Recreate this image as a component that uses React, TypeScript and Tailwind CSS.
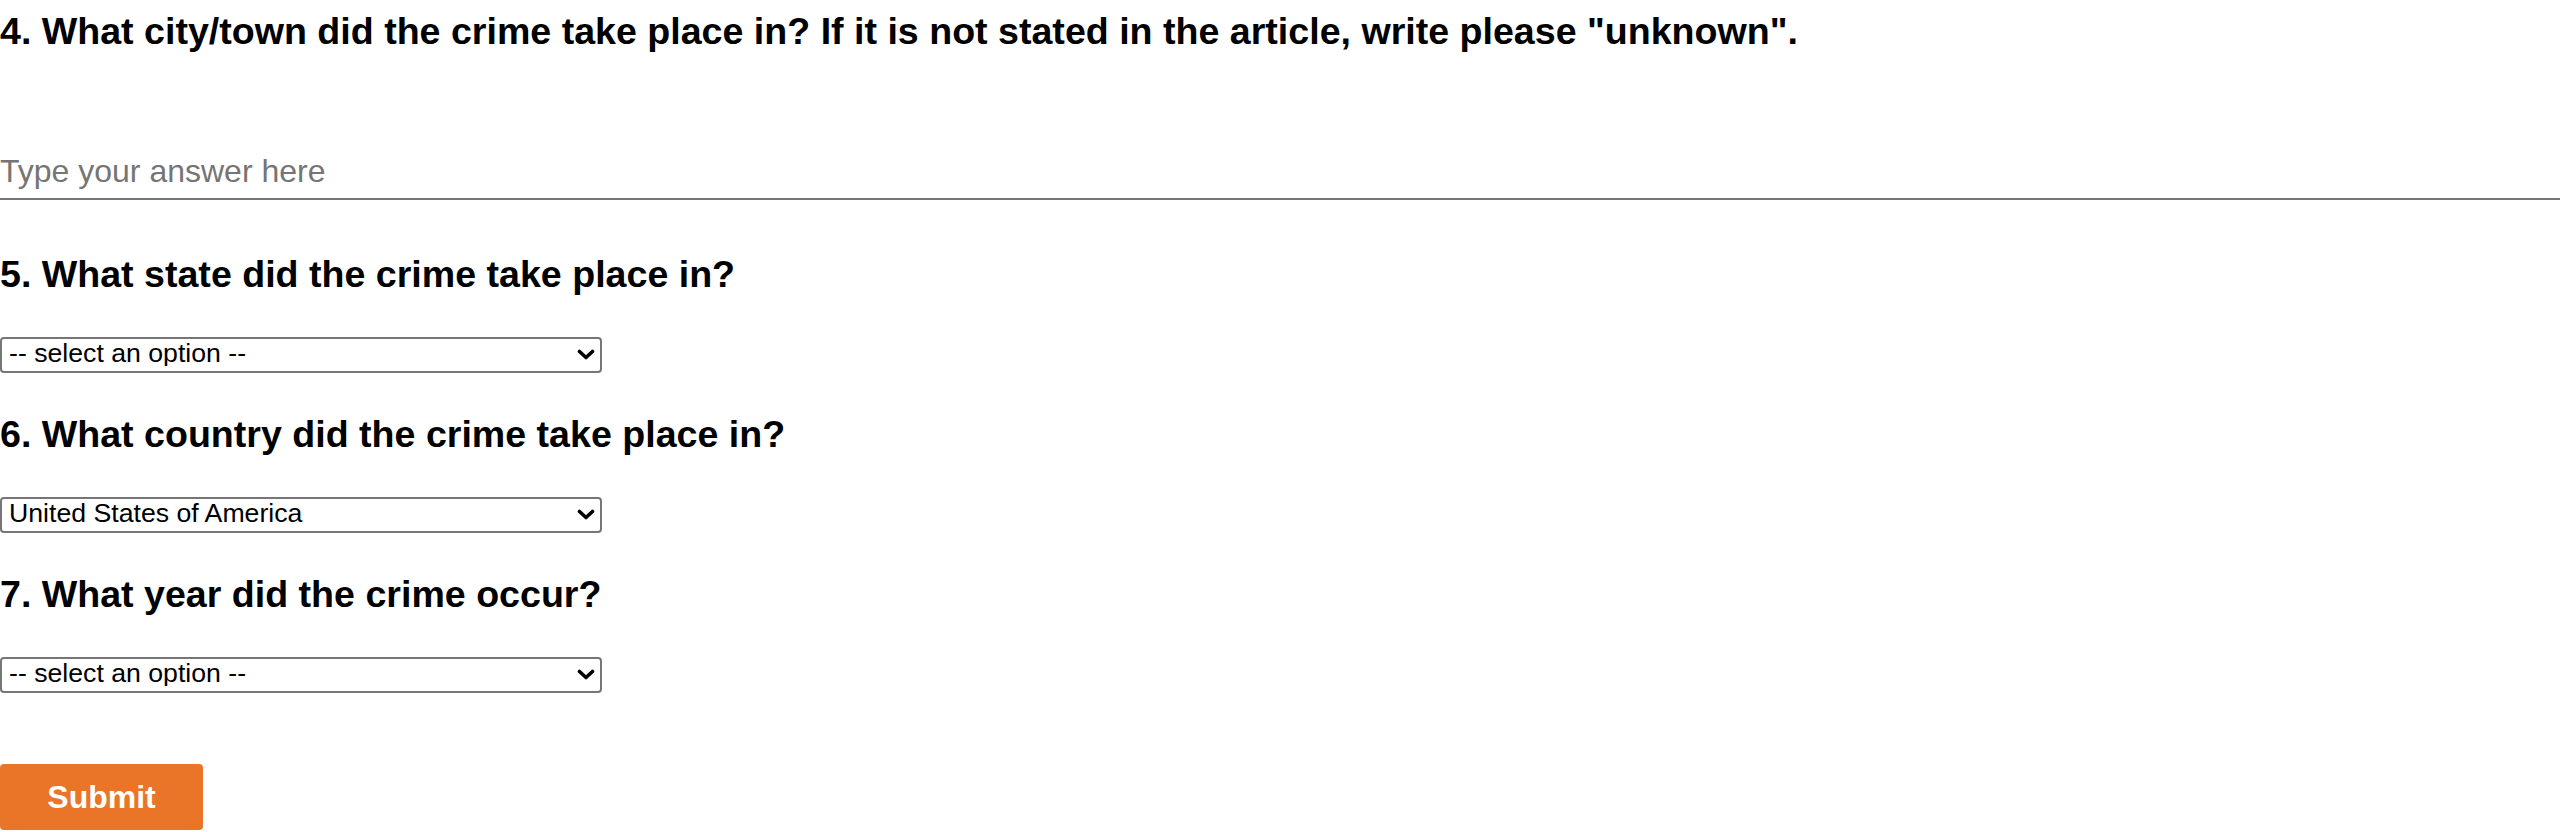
import { useState } from 'react'

const STATES = ['-- select an option --', 'Alabama', 'Alaska', 'Arizona', 'California', 'New York', 'Texas']
const COUNTRIES = ['-- select an option --', 'United States of America', 'Canada', 'Mexico', 'United Kingdom']
const YEARS = ['-- select an option --', '2020', '2019', '2018', '2017', '2016', '2015']

function Chevron() {
  return (
    <svg
      className="pointer-events-none absolute right-[7px] top-[12px]"
      width="18"
      height="11"
      viewBox="0 0 18 11"
      fill="none"
    >
      <path d="M2.5 2.5 L9 8.5 L15.5 2.5" stroke="#000" strokeWidth="3.6" strokeLinecap="round" strokeLinejoin="round" />
    </svg>
  )
}

function Dropdown({ options, value, onChange }: { options: string[]; value: string; onChange: (v: string) => void }) {
  return (
    <div className="relative mt-[41.5px] h-[36px] w-[602px]">
      <select
        value={value}
        onChange={(e) => onChange(e.target.value)}
        className="block h-[36px] w-[602px] appearance-none rounded-[4px] border-2 border-[#767676] bg-white pb-[5px] pl-[7px] pr-[30px] text-[26.67px] leading-[29px] text-black outline-none"
      >
        {options.map((o) => (
          <option key={o} value={o}>
            {o}
          </option>
        ))}
      </select>
      <Chevron />
    </div>
  )
}

function Question({ text, first }: { text: string; first?: boolean }) {
  return (
    <h3 className={`${first ? '' : 'mt-[39.5px]'} text-[37.6px] leading-[43px] font-bold text-black`}>
      {text}
    </h3>
  )
}

export default function App() {
  const [city, setCity] = useState('')
  const [state, setState] = useState(STATES[0])
  const [country, setCountry] = useState(COUNTRIES[1])
  const [year, setYear] = useState(YEARS[0])

  return (
    <div className="min-h-screen bg-white pt-[10px] font-['Liberation_Sans',Arial,Helvetica,sans-serif] text-black">
      <Question
        first
        text={'4. What city/town did the crime take place in? If it is not stated in the article, write please "unknown".'}
      />
      <input
        type="text"
        value={city}
        onChange={(e) => setCity(e.target.value)}
        placeholder="Type your answer here"
        className="mt-[91px] block h-[56px] w-full border-b-2 border-[#767676] bg-white text-[32px] text-black outline-none placeholder:text-[#757575]"
      />

      <h3 className="mt-[52.5px] text-[37.6px] leading-[43px] font-bold">5. What state did the crime take place in?</h3>
      <Dropdown options={STATES} value={state} onChange={setState} />

      <Question text="6. What country did the crime take place in?" />
      <Dropdown options={COUNTRIES} value={country} onChange={setCountry} />

      <Question text="7. What year did the crime occur?" />
      <Dropdown options={YEARS} value={year} onChange={setYear} />

      <button
        type="button"
        className="mt-[71px] block h-[66px] w-[203px] rounded-[4px] bg-[#ea7428] text-[32px] font-bold text-white"
      >
        Submit
      </button>
    </div>
  )
}
